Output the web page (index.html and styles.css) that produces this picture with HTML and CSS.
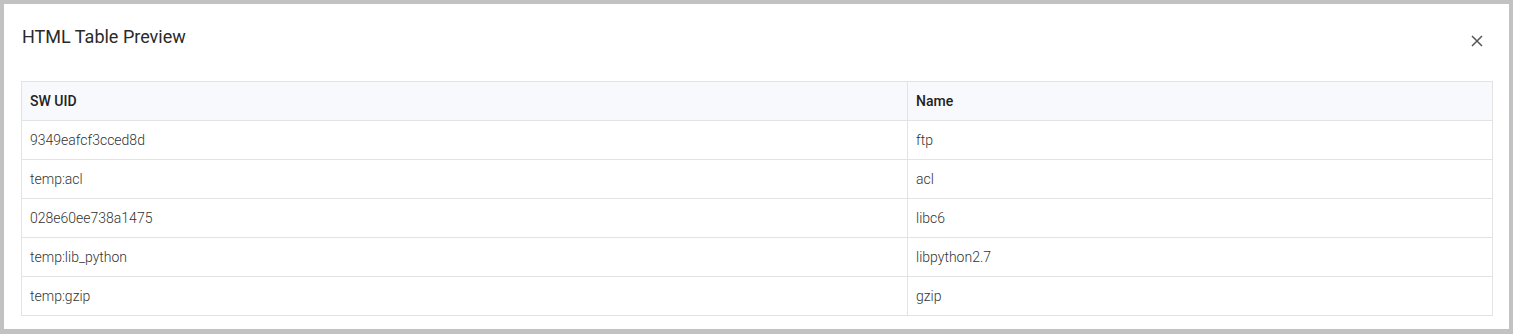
FILE: index.html
```html
<!DOCTYPE html>
<html lang="en">
<head>
<meta charset="utf-8">
<title>HTML Table Preview</title>
<link rel="stylesheet" href="styles.css">
</head>
<body>
<div class="dialog">
  <div class="dialog-header">
    <h2 class="dialog-title">HTML Table Preview</h2>
    <button class="close-btn" aria-label="Close">
      <svg width="12" height="12" viewBox="0 0 12 12"><path d="M1 1 L11 11 M11 1 L1 11" stroke="#555" stroke-width="1.5" fill="none"/></svg>
    </button>
  </div>
  <table class="preview-table">
    <colgroup><col class="col-uid"><col class="col-name"></colgroup>
    <thead>
      <tr><th>SW UID</th><th>Name</th></tr>
    </thead>
    <tbody>
      <tr><td>9349eafcf3cced8d</td><td>ftp</td></tr>
      <tr><td>temp:acl</td><td>acl</td></tr>
      <tr><td>028e60ee738a1475</td><td>libc6</td></tr>
      <tr><td>temp:lib_python</td><td>libpython2.7</td></tr>
      <tr><td>temp:gzip</td><td>gzip</td></tr>
    </tbody>
  </table>
</div>
</body>
</html>
```
FILE: styles.css
```css
html, body {
  margin: 0;
  padding: 0;
}
body {
  background: #c2c2c2;
  padding: 4px 4px 5px 4px;
  font-family: Roboto, "Liberation Sans", Arial, sans-serif;
  height: 334px;
  box-sizing: border-box;
}
.dialog {
  background: #ffffff;
  height: 325px;
  box-sizing: border-box;
  padding: 21px 16px 0 17px;
}
.dialog-header {
  display: flex;
  justify-content: space-between;
  align-items: flex-start;
  height: 24px;
}
.dialog-title {
  margin: 0;
  padding-left: 1px;
  font-size: 18px;
  line-height: 24px;
  font-weight: 400;
  color: #2a2a2a;
}
.close-btn {
  width: 24px;
  height: 24px;
  margin: 4px 4px 0 0;
  padding: 0;
  border: 0;
  background: transparent;
  display: flex;
  align-items: center;
  justify-content: center;
}
.preview-table {
  margin-top: 32px;
  width: 1472px;
  table-layout: fixed;
  border-collapse: separate;
  border-spacing: 0;
  border-top: 1px solid #e3e3e3;
  border-left: 1px solid #e3e3e3;
  font-size: 14px;
  line-height: 18px;
}
.col-uid { width: 886px; }
.preview-table th,
.preview-table td {
  padding: 10px 8px;
  text-align: left;
  border-right: 1px solid #e3e3e3;
  border-bottom: 1px solid #e3e3e3;
}
.preview-table th {
  background: #f8f9fc;
  font-weight: 500;
  color: #222222;
}
.preview-table td {
  color: #333333;
  font-weight: 300;
}
```
